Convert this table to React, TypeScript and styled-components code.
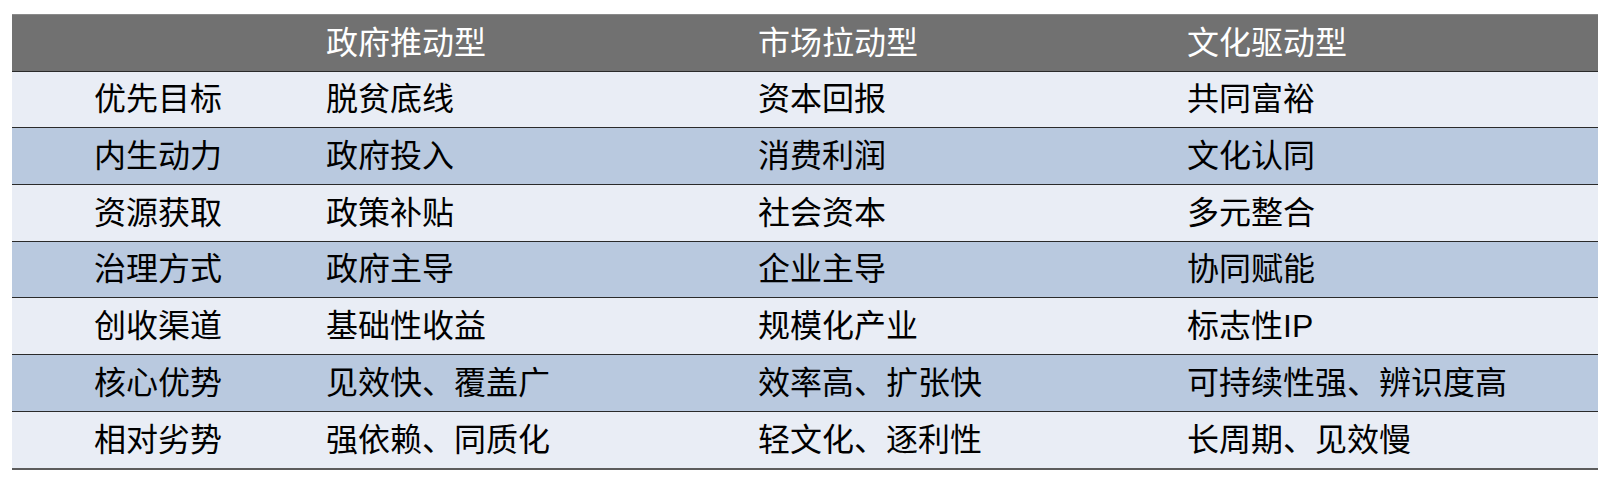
import React from 'react';
import styled, { createGlobalStyle } from 'styled-components';

const GlobalStyle = createGlobalStyle`
    html, body {
        margin: 0;
        padding: 0;
        background: #ffffff;
    }
    body {
        font-family: 'Liberation Sans', 'Noto Sans CJK SC', sans-serif;
    }
`;

const Page = styled.div`
    padding: 14px 11px 0 12px;
`;

const Table = styled.div`
    width: 1586px;
    display: flex;
    flex-direction: column;
    border-top: 1px solid #8a8a8a;
    border-bottom: 2px solid #5c5c5c;
`;

const Row = styled.div<{ $bg: string }>`
    display: grid;
    grid-template-columns: 314px 432px 429px 1fr;
    height: 56.67px;
    box-sizing: border-box;
    background: ${(p) => p.$bg};
    border-bottom: 1.5px solid #2a2a2a;
    &:last-child {
        border-bottom: none;
    }
`;

const Cell = styled.div<{ $head?: boolean }>`
    display: flex;
    align-items: center;
    font-size: 32px;
    line-height: 1;
    color: ${(p) => (p.$head ? '#ffffff' : '#000000')};
    white-space: nowrap;
    &:first-child {
        padding-left: 82px;
    }
`;

const header = ['', '政府推动型', '市场拉动型', '文化驱动型'];

const rows = [
    ['优先目标', '脱贫底线', '资本回报', '共同富裕'],
    ['内生动力', '政府投入', '消费利润', '文化认同'],
    ['资源获取', '政策补贴', '社会资本', '多元整合'],
    ['治理方式', '政府主导', '企业主导', '协同赋能'],
    ['创收渠道', '基础性收益', '规模化产业', '标志性IP'],
    ['核心优势', '见效快、覆盖广', '效率高、扩张快', '可持续性强、辨识度高'],
    ['相对劣势', '强依赖、同质化', '轻文化、逐利性', '长周期、见效慢'],
];

const App = () => {
    return (
        <>
            <GlobalStyle />
            <Page>
                <Table>
                    <Row $bg={'#717171'}>
                        {header.map((h, i) => (
                            <Cell key={i} $head>
                                {h}
                            </Cell>
                        ))}
                    </Row>
                    {rows.map((r, i) => (
                        <Row key={i} $bg={i % 2 === 0 ? '#e9edf5' : '#b9c9df'}>
                            {r.map((c, j) => (
                                <Cell key={j}>{c}</Cell>
                            ))}
                        </Row>
                    ))}
                </Table>
            </Page>
        </>
    );
};

export default App;
